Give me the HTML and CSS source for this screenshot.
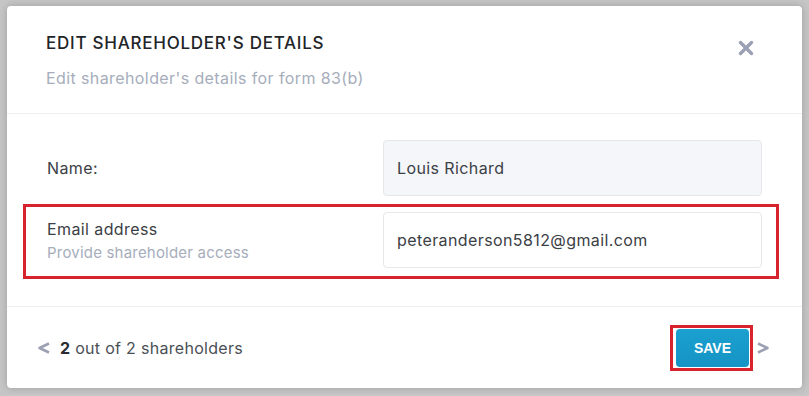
FILE: index.html
```html
<!DOCTYPE html>
<html lang="en">
<head>
    <meta charset="UTF-8">
    <meta name="viewport" content="width=device-width, initial-scale=1.0">
    <title>Edit shareholder's details</title>
    <link rel="stylesheet" href="styles.css">
</head>
<body>

<div class="modal">
    <div class="modal-header">
        <div>
            <h1>Edit shareholder's details</h1>
            <p class="subtitle">Edit shareholder's details for form 83(b)</p>
        </div>
        <button class="close" aria-label="Close">
            <svg width="16" height="16" viewBox="0 0 16 16">
                <path d="M2.5 2.5 L13.5 13.5 M13.5 2.5 L2.5 13.5" stroke="#9ba1b5" stroke-width="3.4" stroke-linecap="round"/>
            </svg>
        </button>
    </div>

    <div class="modal-body">
        <div class="field">
            <div class="field-label">
                <label for="name">Name:</label>
            </div>
            <input type="text" id="name" class="input input-readonly" value="Louis Richard" readonly>
        </div>
        <div class="field field-highlight">
            <div class="field-label">
                <label for="email">Email address</label>
                <span class="hint">Provide shareholder access</span>
            </div>
            <input type="text" id="email" class="input" value="peteranderson5812@gmail.com">
        </div>
    </div>

    <div class="modal-footer">
        <div class="pager">
            <svg class="chevron" width="14" height="12" viewBox="0 0 14 12">
                <polyline points="12,1.5 2.5,6 12,10.5" fill="none" stroke="#9ba1b2" stroke-width="2.6" stroke-linejoin="round"/>
            </svg>
            <span><b>2</b> out of 2 shareholders</span>
        </div>
        <div class="actions">
            <span class="save-wrap"><button class="save">SAVE</button></span>
            <svg class="chevron" width="14" height="12" viewBox="0 0 14 12">
                <polyline points="2,1.5 11.5,6 2,10.5" fill="none" stroke="#9ba1b2" stroke-width="2.6" stroke-linejoin="round"/>
            </svg>
        </div>
    </div>
</div>

</body>
</html>
```

FILE: styles.css
```css
body {
    margin: 0;
    background-color: #c6c6c6;
    font-family: Inter, "Noto Sans", Arial, sans-serif;
}
.modal {
    margin: 6px 7px;
    width: 795px;
    height: 382px;
    background-color: white;
    border-radius: 4px;
    box-shadow: 0 0 8px rgba(0, 0, 0, 0.2);
    display: flex;
    flex-direction: column;
    box-sizing: border-box;
}
.modal-header {
    height: 108px;
    box-sizing: border-box;
    padding: 25px 48px 0 39px;
    border-bottom: 1px solid #eceef1;
    display: flex;
    justify-content: space-between;
    align-items: flex-start;
}
h1 {
    margin: 0;
    font-size: 17px;
    font-weight: 500;
    text-transform: uppercase;
    letter-spacing: 0.75px;
    color: #212428;
    line-height: 24px;
}
.subtitle {
    margin: 12px 0 0;
    font-size: 16px;
    letter-spacing: 0.4px;
    color: #a6adbb;
    line-height: 22px;
}
.close {
    margin-top: 9px;
    padding: 0;
    border: none;
    background: none;
    cursor: pointer;
}
.modal-body {
    height: 193px;
    box-sizing: border-box;
    padding: 23px 23px 0 16px;
    border-bottom: 1px solid #eceef1;
}
.field {
    display: flex;
    align-items: center;
    justify-content: space-between;
    padding: 0 14px 0 21px;
    border: 3px solid transparent;
}
.field-highlight {
    margin-top: 5px;
    padding: 5px 14px 8px 21px;
    border-color: #d7232e;
}
.field-label {
    display: flex;
    flex-direction: column;
}
label {
    font-size: 16px;
    letter-spacing: 0.4px;
    color: #3b4045;
    line-height: 22px;
}
.hint {
    margin-top: 3px;
    font-size: 15px;
    letter-spacing: 0.2px;
    color: #a6adbb;
    line-height: 20px;
}
.input {
    width: 379px;
    height: 56px;
    padding: 0 13px;
    border: 1px solid #e6e8ec;
    border-radius: 4px;
    box-sizing: border-box;
    font-family: inherit;
    font-size: 16px;
    letter-spacing: 0.4px;
    color: #3b4045;
    background-color: white;
}
.input-readonly {
    background-color: #f5f6fa;
}
.modal-footer {
    flex: 1;
    display: flex;
    align-items: center;
    justify-content: space-between;
    padding: 0 32px 0 30px;
}
.pager {
    display: flex;
    align-items: center;
    gap: 9px;
    font-size: 16px;
    letter-spacing: 0.3px;
    color: #4a4f55;
}
.pager b {
    color: #2a2e33;
}
.actions {
    display: flex;
    align-items: center;
    gap: 3px;
}
.save-wrap {
    display: block;
    border: 3px solid #d7232e;
    padding: 1px 1px 1px 3px;
}
.save {
    display: block;
    width: 73px;
    height: 38px;
    border: none;
    border-radius: 4px;
    background: linear-gradient(#1ba0cf, #1494c4);
    color: white;
    font-family: "Liberation Sans", Arial, sans-serif;
    font-weight: bold;
    font-size: 14px;
    cursor: pointer;
}
```
